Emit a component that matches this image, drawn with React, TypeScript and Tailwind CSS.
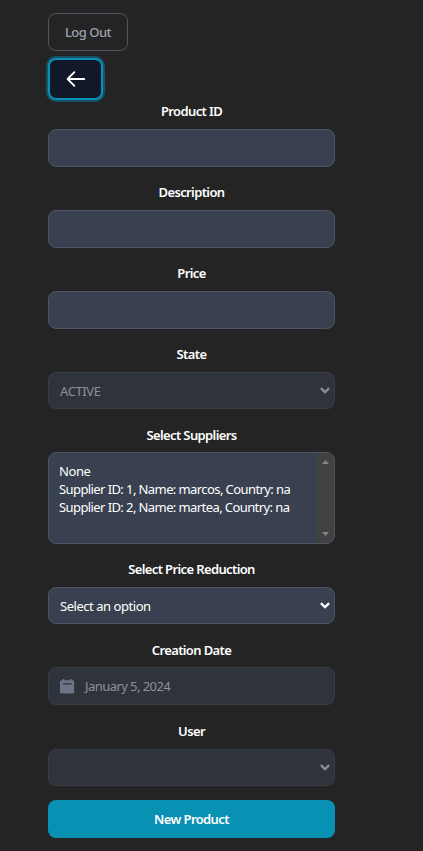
import type { ReactNode } from "react";

function Field({ label, className, children }: { label: string; className: string; children: ReactNode }) {
  return (
    <div className={`flex flex-col ${className}`}>
      <span className="h-5 text-center text-[13px] leading-5 font-semibold tracking-[-0.62px] text-white">{label}</span>
      {children}
    </div>
  );
}

const box = "w-full rounded-lg border text-[13px]";
const active = "border-[#4b5563] bg-[#394150] text-white";
const disabled = "border-[#383d46] bg-[#2f333c] text-[#8f9092]";

function Chevron() {
  return (
    <svg className="h-[7px] w-[10px] shrink-0" viewBox="0 0 10 7" fill="none" stroke="currentColor" strokeWidth="2.2">
      <path d="M0.9 1.1 5 5.1 9.1 1.1" />
    </svg>
  );
}

function Select({ text, look, tracking = "" }: { text: string; look: string; tracking?: string }) {
  return (
    <div className={`${box} ${look} flex h-[37px] items-center justify-between pr-1 pl-[11px]`}>
      <span className={`pt-0.5 ${tracking}`}>{text}</span>
      <Chevron />
    </div>
  );
}

export default function App() {
  return (
    <div className="h-[851px] w-full bg-[#242424] pt-[13px] pl-12 font-['Noto_Sans',sans-serif]">
      <div className="flex w-[287px] flex-col">
        <button className="h-[38px] w-20 rounded-lg border border-[#4b5563] pt-0.5 text-[13px] font-medium tracking-[-0.5px] text-[#9ca3af]">Log Out</button>
        <button className="mt-[7px] flex h-[42px] w-[55px] items-center justify-center rounded-lg border-2 border-[#0891b2] bg-[#111827] text-white ring-2 ring-[#155e75]/80">
          <svg className="h-5 w-5" viewBox="0 0 20 20" fill="none" stroke="currentColor" strokeWidth="1.8" strokeLinecap="round" strokeLinejoin="round">
            <path d="M18.3 10H1.7M8.4 3.2 1.6 10l6.8 6.8" />
          </svg>
        </button>
        <Field label="Product ID" className="mt-px gap-2">
          <div className={`${box} ${active} h-[38px]`} />
        </Field>
        <Field label="Description" className="mt-[15px] gap-2">
          <div className={`${box} ${active} h-[38px]`} />
        </Field>
        <Field label="Price" className="mt-[15px] gap-2">
          <div className={`${box} ${active} h-[38px]`} />
        </Field>
        <Field label="State" className="mt-[15px] gap-2">
          <Select text="ACTIVE" look={disabled} tracking="tracking-[-0.4px]" />
        </Field>
        <Field label="Select Suppliers" className="mt-4 gap-[7px]">
          <div className={`${box} ${active} flex h-[92px] justify-between overflow-hidden`}>
            <div className="flex flex-col pt-[9px] pl-2.5 leading-[18px] tracking-[-0.59px] whitespace-nowrap">
              <span className="tracking-[-0.4px]">None</span>
              <span>Supplier ID: 1, Name: marcos, Country: na</span>
              <span>Supplier ID: 2, Name: martea, Country: na</span>
            </div>
            <div className="flex w-[17px] flex-col items-center justify-between bg-[#424242] pt-[7px] pb-[7px] text-[#858585]">
              <svg className="h-1 w-[7px]" viewBox="0 0 7 4" fill="currentColor"><path d="M0 4 3.5 0 7 4Z" /></svg>
              <svg className="h-1 w-[7px]" viewBox="0 0 7 4" fill="currentColor"><path d="M0 0h7L3.5 4Z" /></svg>
            </div>
          </div>
        </Field>
        <Field label="Select Price Reduction" className="mt-[15px] gap-2">
          <Select text="Select an option" look={active} tracking="tracking-[-0.46px]" />
        </Field>
        <Field label="Creation Date" className="mt-4 gap-[7px]">
          <div className={`${box} ${disabled} flex h-[38px] items-center pl-[11px]`}>
            <svg className="h-[15px] w-[15px] text-[#6b7585]" viewBox="0 0 15 15" fill="currentColor">
              <path fillRule="evenodd" d="M2.6 0h1.7v1.3h5.6V0h1.7v1.3h1A1.6 1.6 0 0 1 14.2 2.9v10a1.6 1.6 0 0 1-1.6 1.6h-11A1.6 1.6 0 0 1 0 12.9v-10a1.6 1.6 0 0 1 1.6-1.6h1ZM2.6 4.3v1.3h9V4.3Z" />
            </svg>
            <span className="ml-[10px] pt-0.5 tracking-[-0.56px]">January 5, 2024</span>
          </div>
        </Field>
        <Field label="User" className="mt-4 gap-2">
          <Select text="" look={disabled} />
        </Field>
        <button className="mt-3.5 h-[38px] w-full rounded-lg bg-[#0891b2] pt-0.5 text-[13px] font-semibold tracking-[-0.6px] text-white">New Product</button>
      </div>
    </div>
  );
}
